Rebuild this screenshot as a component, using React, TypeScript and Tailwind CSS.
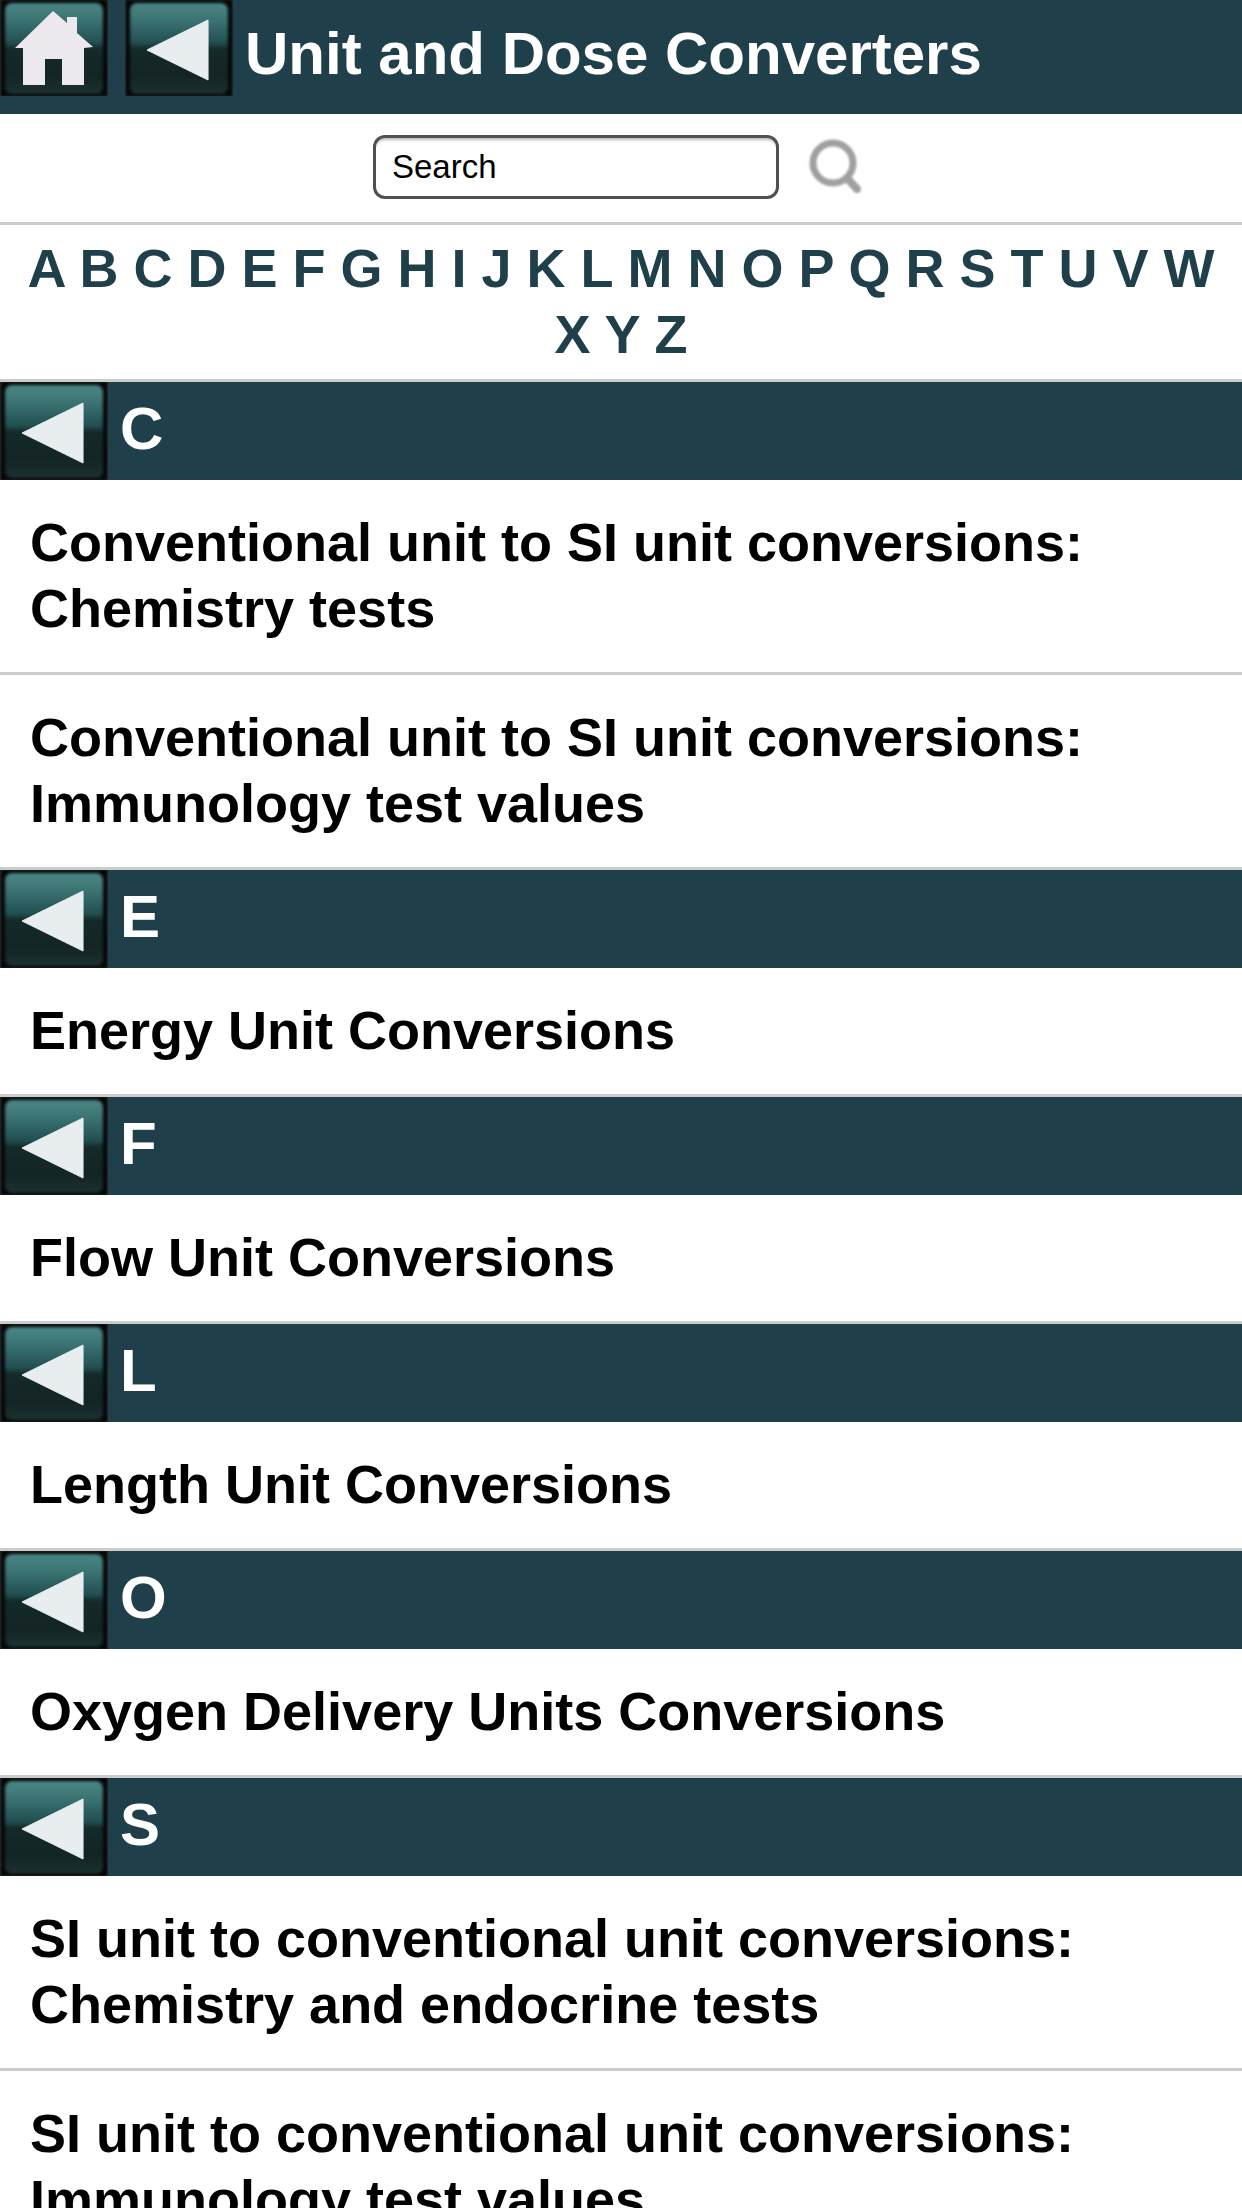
import React from 'react';

const letters = 'A B C D E F G H I J K L M N O P Q R S T U V W X Y Z';

const sections = [
  { letter: 'C', items: [['Conventional unit to SI unit conversions:', 'Chemistry tests'], ['Conventional unit to SI unit conversions:', 'Immunology test values']] },
  { letter: 'E', items: [['Energy Unit Conversions']] },
  { letter: 'F', items: [['Flow Unit Conversions']] },
  { letter: 'L', items: [['Length Unit Conversions']] },
  { letter: 'O', items: [['Oxygen Delivery Units Conversions']] },
  { letter: 'S', items: [['SI unit to conventional unit conversions:', 'Chemistry and endocrine tests'], ['SI unit to conventional unit conversions:', 'Immunology test values']] },
];

const GlossButton: React.FC<{ children: React.ReactNode; className: string }> = ({ children, className }) => (
  <div className={`relative w-[108px] shrink-0 overflow-hidden bg-[#2a2e2e] ${className}`}>
    <div className="absolute inset-y-0 inset-x-[1px] bg-[#050808] blur-[1px]" />
    <div className="absolute inset-x-[5px] top-[3px] bottom-[2px] rounded-[7px] blur-[1.5px] bg-[linear-gradient(to_bottom,#4a8684_0%,#3c7474_18%,#214e50_44%,#142a2a_50%,#132423_80%,#1b3130_100%)]" />
    <div className="relative w-full h-full flex items-center justify-center">{children}</div>
  </div>
);

const BackArrow = () => (
  <svg viewBox="0 0 66 62" className="w-[64px] h-[62px] ml-[-3px] mt-[3px] blur-[0.7px]" preserveAspectRatio="none">
    <path d="M64 1 L1 31 L64 61 Z" fill="#e8edef" stroke="#e8edef" strokeLinejoin="round" strokeWidth="1" />
  </svg>
);

const HomeIcon = () => (
  <svg viewBox="0 0 80 76" className="w-[80px] h-[76px] blur-[0.7px]">
    <path
      d="M39 1 L53 13 L53 7 L63 7 L63 23 L79 37 L70 38 L70 75 L48 75 L48 49 L31 49 L31 75 L9 75 L9 38 L1 38 Z"
      fill="#ece9ee"
    />
  </svg>
);

export default function App() {
  return (
    <div className="w-[1242px] h-[2208px] overflow-hidden bg-white font-['Liberation_Sans',Arial,sans-serif]">
      <header className="h-[114px] bg-[#1f3f4a] flex items-start">
        <GlossButton className="h-[96px]"><HomeIcon /></GlossButton>
        <GlossButton className="h-[96px] ml-[17px]"><BackArrow /></GlossButton>
        <h1 className="ml-[12px] mt-[20px] text-[60px] leading-[68px] font-bold text-white">Unit and Dose Converters</h1>
      </header>

      <div className="h-[111px] border-b-[3px] border-[#cccccc] flex items-start">
        <div className="ml-[373px] mt-[21px] w-[406px] h-[64px] rounded-[12px] border-[3px] border-[#505050] pl-[16px] flex items-center text-[33px] text-black shadow-[inset_0_4px_3px_-2px_#bbbbbb]">
          Search
        </div>
        <svg viewBox="0 0 64 64" className="ml-[28px] mt-[20px] w-[64px] h-[64px] blur-[1.2px]">
          <circle cx="26" cy="29" r="20" fill="none" stroke="#a0a0a0" strokeWidth="7" />
          <path d="M40 44 L50 55" stroke="#a0a0a0" strokeWidth="8" strokeLinecap="round" />
        </svg>
      </div>

      <div className="h-[157px] border-b-[3px] border-[#cccccc] pt-[10px] px-[20px] text-center text-[54px] leading-[66px] font-bold text-[#1f3f4a]">
        {letters}
      </div>

      {sections.map((section) => (
        <section key={section.letter}>
          <div className="h-[98px] bg-[#1f3f4a] flex items-center">
            <GlossButton className="h-[98px]"><BackArrow /></GlossButton>
            <span className="ml-[12px] mb-[4px] text-[60px] leading-[68px] font-bold text-white">{section.letter}</span>
          </div>
          {section.items.map((item) => (
            <div key={item.join(' ')} className="px-[30px] pt-[29px] pb-[31px] border-b-[3px] border-[#cccccc] text-[54px] leading-[66px] font-bold text-black">
              {item.map((line) => <div key={line}>{line}</div>)}
            </div>
          ))}
        </section>
      ))}
    </div>
  );
}
